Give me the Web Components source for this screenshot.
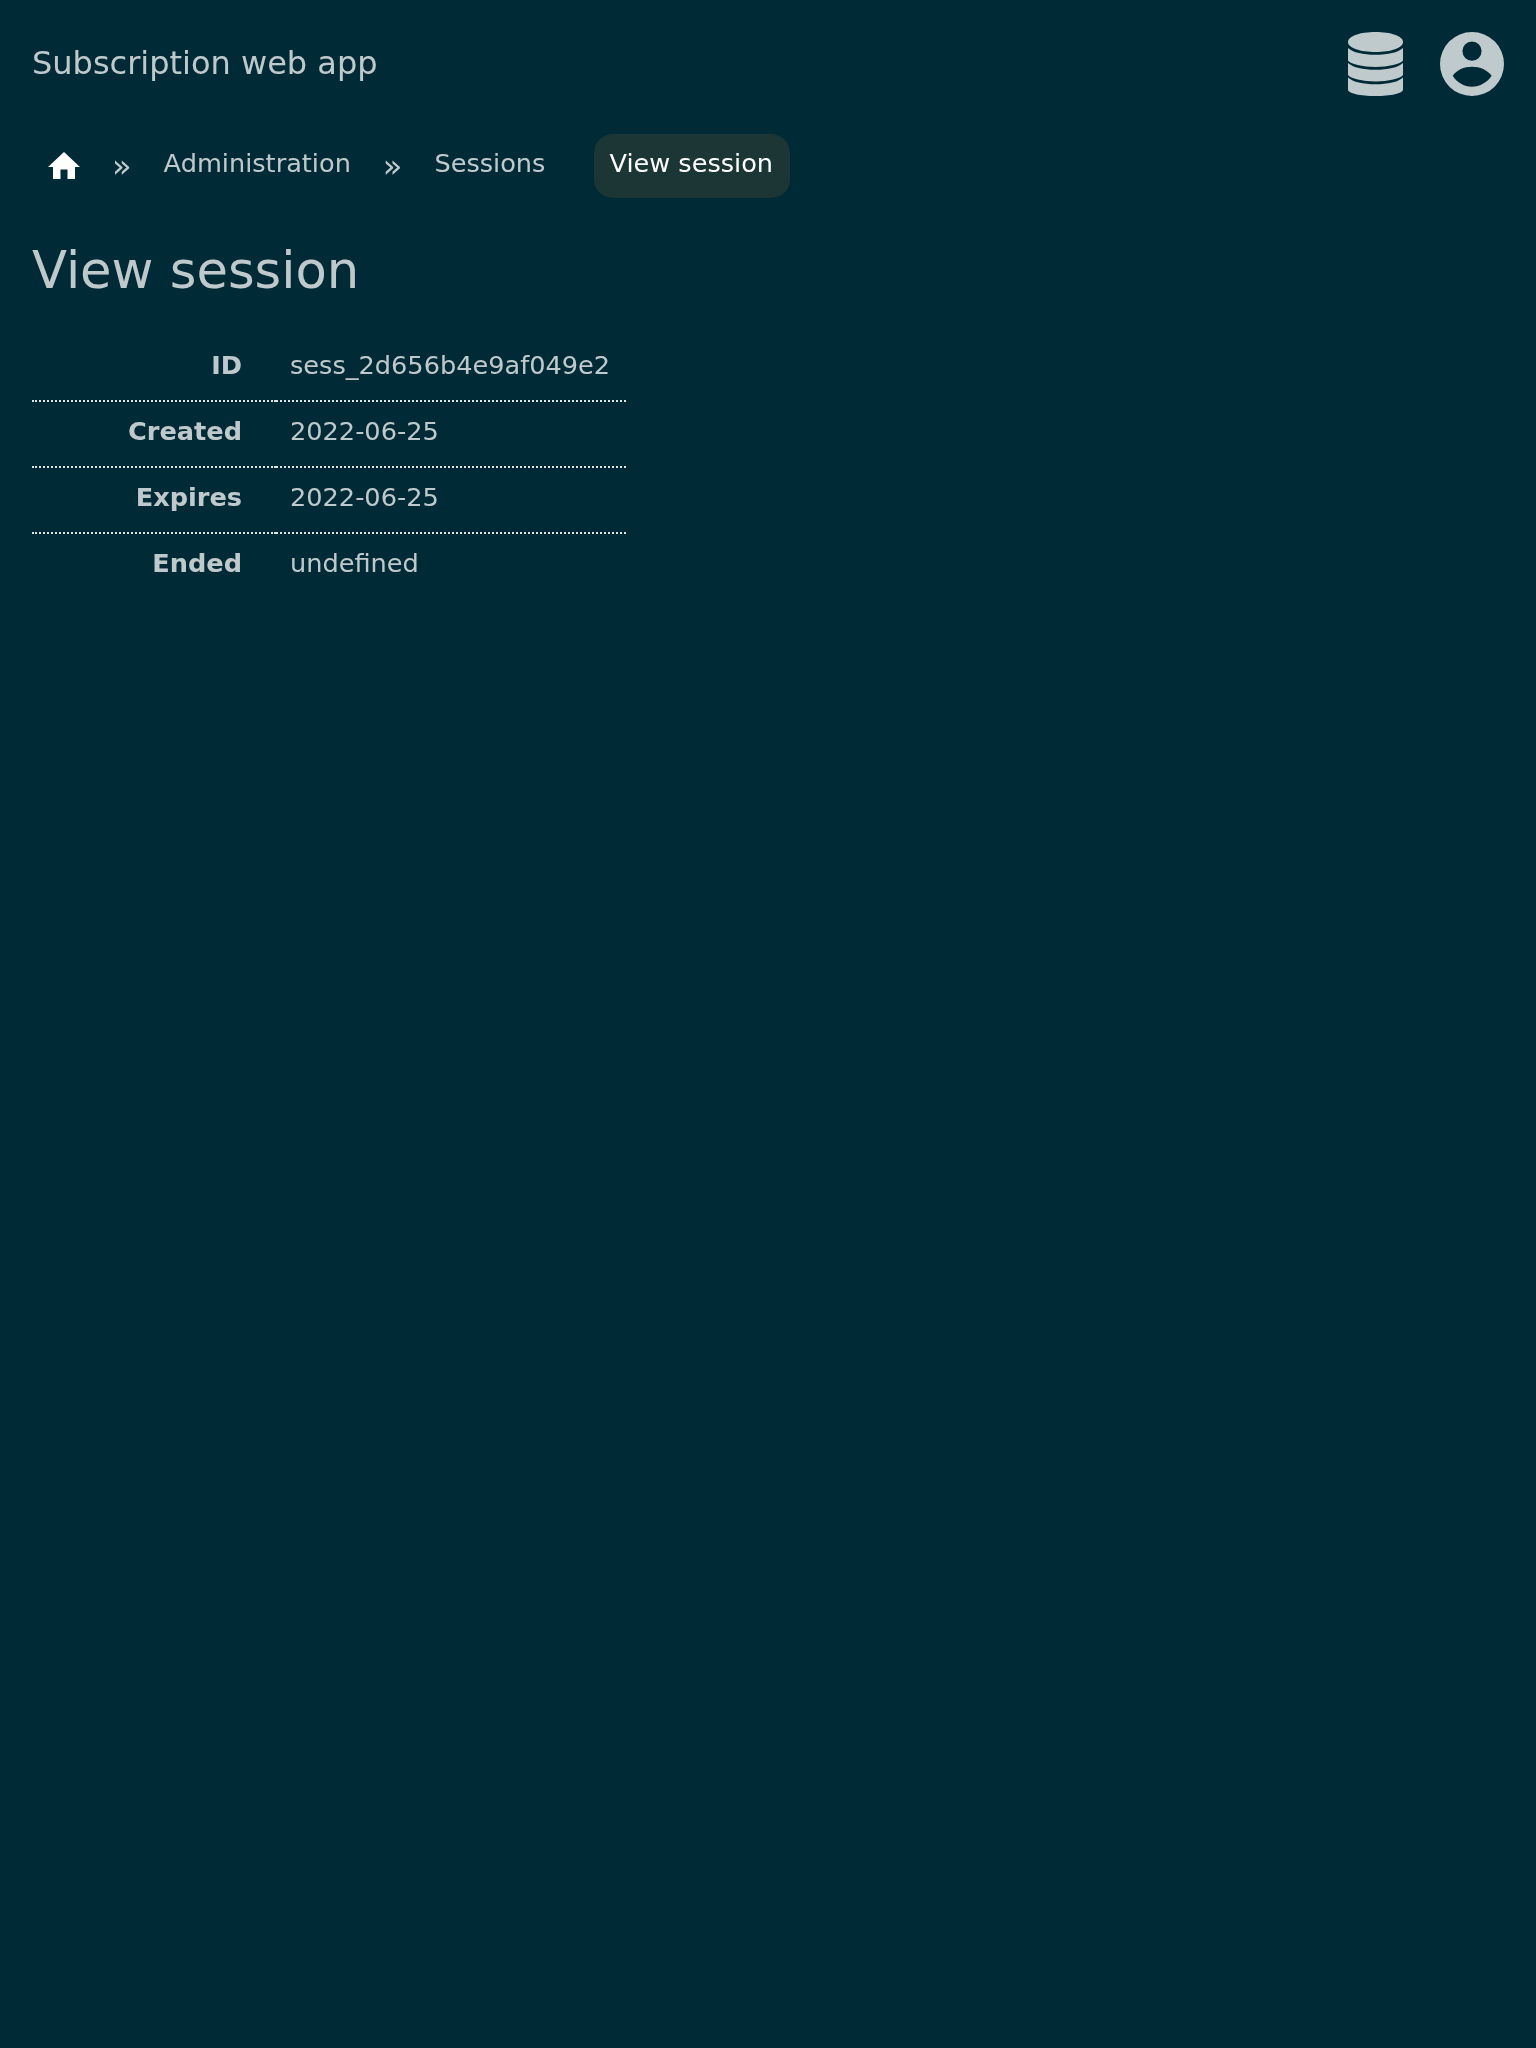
<!DOCTYPE html>
<html lang="en">
<head>
<meta charset="utf-8">
<title>View session</title>
<style>
  html, body { margin: 0; background: #002b36; min-height: 2048px; }
  body { font-family: "DejaVu Sans", sans-serif; color: #fff; font-size: 25.6px; }
</style>
</head>
<body>
<app-shell>
  <app-header title="Subscription web app"></app-header>
  <app-breadcrumbs>
    <crumb-item home></crumb-item>
    <crumb-item>Administration</crumb-item>
    <crumb-item>Sessions</crumb-item>
    <crumb-item current>View session</crumb-item>
  </app-breadcrumbs>
  <h-title>View session</h-title>
  <detail-table>
    <detail-row label="ID">sess_2d656b4e9af049e2</detail-row>
    <detail-row label="Created">2022-06-25</detail-row>
    <detail-row label="Expires">2022-06-25</detail-row>
    <detail-row label="Ended">undefined</detail-row>
  </detail-table>
</app-shell>
<script>
class AppShell extends HTMLElement {
  constructor() {
    super();
    this.attachShadow({ mode: "open" });
    this.shadowRoot.innerHTML = `
      <style>
        :host { display: block; will-change: transform; }
      </style>
      <slot></slot>
    `;
  }
}

class AppHeader extends HTMLElement {
  constructor() {
    super();
    this.attachShadow({ mode: "open" });
    this.shadowRoot.innerHTML = `
      <style>
        :host {
          display: flex;
          align-items: center;
          justify-content: space-between;
          padding: 32px;
        }
        .brand { font-size: 32px; line-height: 62px; height: 64px; opacity: .75; }
        .icons { display: flex; align-items: center; gap: 37px; }
        svg { display: block; fill: #bfcacd; }
      </style>
      <span class="brand"></span>
      <div class="icons">
        <svg width="55" height="64" viewBox="0 0 55 64">
          <path d="M27.500 0C42.700 0 55 4 55 10C55 16 42.700 20 27.500 20C12.300 20 0 16 0 10C0 4 12.300 0 27.500 0Z"/>
          <path d="M0 16C5 20.500 15 22.800 27.500 22.800C40 22.800 50 20.500 55 16V28.500C53 32 40 35 27.500 35C15 35 2 32 0 28.500Z"/>
          <path d="M0 31C5 35.500 15 37.800 27.500 37.800C40 37.800 50 35.500 55 31V43C53 46.500 40 49.500 27.500 49.500C15 49.500 2 46.500 0 43Z"/>
          <path d="M0 45.500C5 50 15 52.300 27.500 52.300C40 52.300 50 50 55 45.500V57.500C55 61.500 42.700 64 27.500 64C12.300 64 0 61.500 0 57.500Z"/>
        </svg>
        <svg width="64" height="64" viewBox="0 0 64 64">
          <path fill-rule="evenodd" d="M32 0A32 32 0 1 1 32 64A32 32 0 1 1 32 0ZM32 9.500A9.600 9.600 0 1 0 32 28.700A9.600 9.600 0 1 0 32 9.500ZM32 34.700C24 34.700 16.500 38 12.700 43.700C16.500 50 24 54.700 32 54.700C40 54.700 47.500 50 51.700 43.700C47.500 38 40 34.700 32 34.700Z"/>
        </svg>
      </div>
    `;
    this.shadowRoot.querySelector(".brand").textContent = this.getAttribute("title");
  }
}

class AppBreadcrumbs extends HTMLElement {
  constructor() {
    super();
    this.attachShadow({ mode: "open" });
    this.shadowRoot.innerHTML = `
      <style>
        :host {
          display: flex;
          align-items: center;
          padding: 6px 32px 0;
          height: 64px;
        }
      </style>
      <slot></slot>
    `;
  }
}

class CrumbItem extends HTMLElement {
  constructor() {
    super();
    this.attachShadow({ mode: "open" });
    const home = this.hasAttribute("home");
    this.shadowRoot.innerHTML = `
      <style>
        :host { display: flex; align-items: center; }
        a {
          display: block;
          padding: 0 16px;
          line-height: 58px;
          height: 64px;
          color: #fff;
          border-radius: 19px;
          white-space: nowrap;
          opacity: ${home ? 1 : .75};
        }
        a svg { display: block; margin-top: 18px; fill: #fff; }
        :host([current]) a { background: #1b3634; margin-left: 33px; padding: 0 17px 0 15px; opacity: 1; }
        .sep { padding: 0 16px; font-size: 32px; line-height: 64px; opacity: .75; }
        :host([current]) .sep, :host(:nth-last-child(2)) .sep { display: none; }
      </style>
      <a>${home ? `<svg width="32" height="27" viewBox="0 0 32 27"><path d="M16 0L32 15H27V27H19.500V17.500H12.500V27H5V15H0Z"/></svg>` : `<slot></slot>`}</a>
      <span class="sep">»</span>
    `;
  }
}

class HTitle extends HTMLElement {
  constructor() {
    super();
    this.attachShadow({ mode: "open" });
    this.shadowRoot.innerHTML = `
      <style>
        :host { display: block; padding: 40px 32px 0; }
        h1 { margin: 0; font-size: 51.200px; font-weight: 400; line-height: 64px; opacity: .75; }
      </style>
      <h1><slot></slot></h1>
    `;
  }
}

class DetailTable extends HTMLElement {
  constructor() {
    super();
    this.attachShadow({ mode: "open" });
    this.shadowRoot.innerHTML = `
      <style>
        :host { display: block; width: max-content; margin: 34px 0 0 32px; }
      </style>
      <slot></slot>
    `;
  }
}

class DetailRow extends HTMLElement {
  constructor() {
    super();
    this.attachShadow({ mode: "open" });
    this.shadowRoot.innerHTML = `
      <style>
        :host {
          display: grid;
          grid-template-columns: 244px 350px;
          height: 66px;
          line-height: 59px;
        }
        .label, .value { box-sizing: border-box; border-bottom: 2px dotted #dfe4e6; }
        :host(:last-child) .label, :host(:last-child) .value { border-bottom: 0; }
        .label { font-weight: 700; text-align: right; padding-right: 34px; }
        .value { padding-left: 14px; padding-right: 16px; white-space: nowrap; }
        span { opacity: .75; display: inline-block; }
      </style>
      <div class="label"><span></span></div>
      <div class="value"><span><slot></slot></span></div>
    `;
    this.shadowRoot.querySelector(".label span").textContent = this.getAttribute("label");
  }
}

customElements.define("app-shell", AppShell);
customElements.define("app-header", AppHeader);
customElements.define("app-breadcrumbs", AppBreadcrumbs);
customElements.define("crumb-item", CrumbItem);
customElements.define("h-title", HTitle);
customElements.define("detail-table", DetailTable);
customElements.define("detail-row", DetailRow);
</script>
</body>
</html>
